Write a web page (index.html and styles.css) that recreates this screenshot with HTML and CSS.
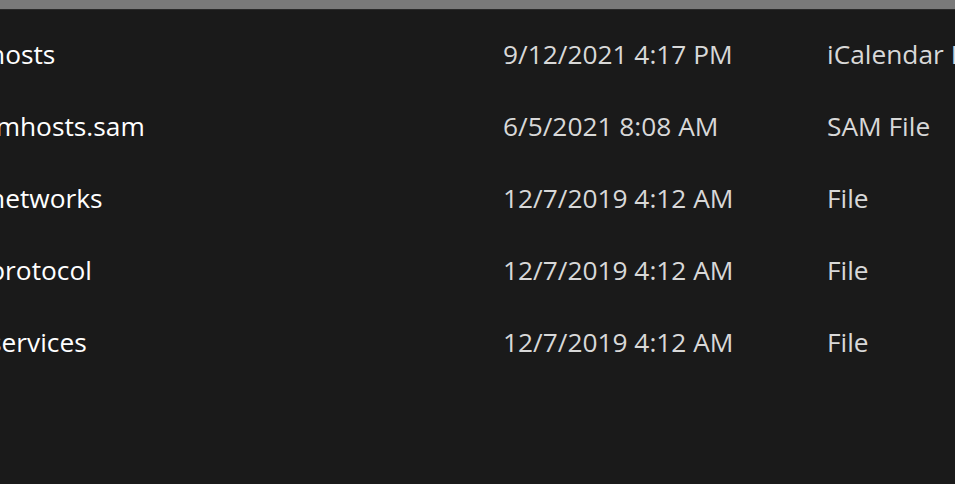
FILE: index.html
```html
<!DOCTYPE html>
<html>
<head>
<meta charset="utf-8">
<link rel="stylesheet" href="styles.css">
</head>
<body>
<div class="topbar"></div>
<div class="list">
  <div class="row"><span class="name">hosts</span><span class="date">9/12/2021 4:17 PM</span><span class="type">iCalendar File</span></div>
  <div class="row"><span class="name">lmhosts.sam</span><span class="date">6/5/2021 8:08 AM</span><span class="type">SAM File</span></div>
  <div class="row"><span class="name">networks</span><span class="date">12/7/2019 4:12 AM</span><span class="type">File</span></div>
  <div class="row"><span class="name">protocol</span><span class="date">12/7/2019 4:12 AM</span><span class="type">File</span></div>
  <div class="row"><span class="name">services</span><span class="date">12/7/2019 4:12 AM</span><span class="type">File</span></div>
</div>
</body>
</html>
```
FILE: styles.css
```css
html, body {
  margin: 0;
  padding: 0;
  background: #1a1a1a;
  height: 100%;
  overflow: hidden;
}
body {
  font-family: "Open Sans", "Noto Sans", sans-serif;
  font-size: 26.3px;
}
.topbar {
  height: 9px;
  background: #7a7a7a;
  border-bottom: 1px solid #2a2a2a;
}
.list {
  padding-top: 8px;
  margin-left: -11px;
}
.row {
  display: grid;
  grid-template-columns: 514px 324px 1fr;
  height: 72px;
  line-height: 72px;
  white-space: nowrap;
}
.name {
  color: #ffffff;
}
.date, .type {
  color: #d8d8d8;
}
```
